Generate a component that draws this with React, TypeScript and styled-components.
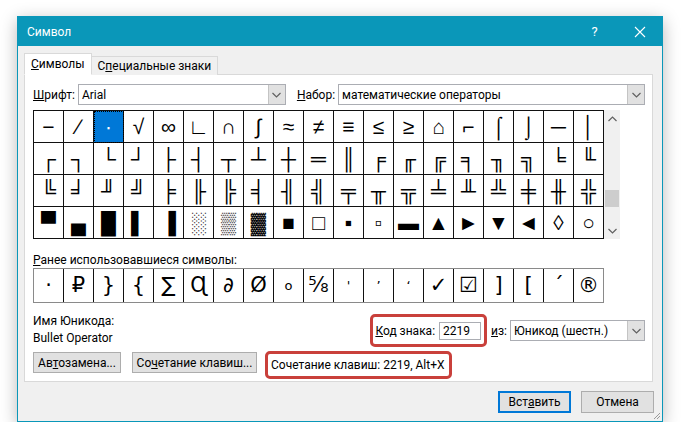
import styled, { createGlobalStyle, css } from 'styled-components';

const GlobalStyle = createGlobalStyle`
  html, body { margin: 0; padding: 0; background: #fff; }
  body {
    font-family: Roboto, "Noto Sans", sans-serif;
    font-size: 12px;
    color: #000;
  }
`;

const ROWS = [
  '−∕∙√∞∟∩∫≈≠≡≤≥⌂⌐⌠⌡─│',
  '┌┐└┘├┤┬┴┼═║╒╓╔╕╖╗╘╙',
  '╚╛╜╝╞╟╠╡╢╣╤╥╦╧╨╩╪╫╬',
  '▀▄█▌▐░▒▓■□▪▫▬▲►▼◄◊○',
];

const RECENT = ['·', '₽', '}', '{', '∑', 'Ɋ', '∂', 'Ø', 'o', '⅝', "'", '’', '‘', '✓', '☑', ']', '[', '´', '®'];

const Chevron = ({ up }: { up?: boolean }) => (
  <svg width="9" height="6" viewBox="0 0 9 6">
    <path d={up ? 'M0.5 5 L4.5 1 L8.5 5' : 'M0.5 1 L4.5 5 L8.5 1'} fill="none" stroke="#606060" strokeWidth="1.2" />
  </svg>
);

export default function App() {
  return (
    <>
      <GlobalStyle />
      <Page>
        <Dialog>
          <TitleBar>
            <Title>Символ</Title>
            <TitleButtons>
              <TitleButton>?</TitleButton>
              <TitleButton>
                <svg width="12" height="12" viewBox="0 0 12 12">
                  <path d="M1 1 L11 11 M11 1 L1 11" stroke="#fff" strokeWidth="1.1" />
                </svg>
              </TitleButton>
            </TitleButtons>
          </TitleBar>

          <Body>
            <Tabs>
              <Tab $active>
                <Key>С</Key>имволы
              </Tab>
              <Tab>
                С<Key>п</Key>ециальные знаки
              </Tab>
            </Tabs>

            <Panel>
              <FieldRow>
                <Label>
                  <Key>Ш</Key>рифт:
                </Label>
                <Combo $width={208}>
                  <ComboText>Arial</ComboText>
                  <ComboButton>
                    <Chevron />
                  </ComboButton>
                </Combo>
                <Label $gap={11}>
                  <Key>Н</Key>абор:
                </Label>
                <Combo $grow>
                  <ComboText>математические операторы</ComboText>
                  <ComboButton>
                    <Chevron />
                  </ComboButton>
                </Combo>
              </FieldRow>

              <GridWrap>
                <Grid>
                  {ROWS.map((row, r) =>
                    Array.from(row).map((ch, c) => (
                      <Cell key={`${r}-${c}`} $selected={r === 0 && c === 2}>
                        {ch}
                      </Cell>
                    )),
                  )}
                </Grid>
                <ScrollBar>
                  <ScrollArrow>
                    <Chevron up />
                  </ScrollArrow>
                  <ScrollTrack>
                    <ScrollThumb />
                  </ScrollTrack>
                  <ScrollArrow>
                    <Chevron />
                  </ScrollArrow>
                </ScrollBar>
              </GridWrap>

              <RecentLabel>
                <Key>Р</Key>анее использовавшиеся символы:
              </RecentLabel>
              <Recent>
                {RECENT.map((ch, i) => (
                  <RecentCell key={i} $small={i === 8 || (i >= 10 && i <= 12)}>
                    {ch}
                  </RecentCell>
                ))}
              </Recent>

              <InfoRow>
                <NameBlock>
                  <div>Имя Юникода:</div>
                  <div>Bullet Operator</div>
                </NameBlock>
                <CodeGroup>
                  <Highlight $padding="0 3px 0 2px">
                    <span>
                      <Key>К</Key>од знака:
                    </span>
                    <CodeInput>2219</CodeInput>
                  </Highlight>
                  <Label $gap={4}>
                    <Key>и</Key>з:
                  </Label>
                  <Combo $width={135}>
                    <ComboText>Юникод (шестн.)</ComboText>
                    <ComboButton>
                      <Chevron />
                    </ComboButton>
                  </Combo>
                </CodeGroup>
              </InfoRow>

              <ButtonRow>
                <Button $width={88}>
                  <span>
                    Ав<Key>т</Key>озамена...
                  </span>
                </Button>
                <Button $width={125}>
                  <span>
                    Со<Key>ч</Key>етание клавиш...
                  </span>
                </Button>
                <Highlight $padding="0 4px 0 3px" $height={28}>
                  Сочетание клавиш: 2219, Alt+X
                </Highlight>
              </ButtonRow>
            </Panel>

            <Footer>
              <Button $width={73} $height={22} $primary>
                <span>
                  Вст<Key>а</Key>вить
                </span>
              </Button>
              <Button $width={73} $height={22}>
                Отмена
              </Button>
            </Footer>
          </Body>

          <Grip width="10" height="10" viewBox="0 0 10 10">
            <path d="M9 3 L3 9 M9 6 L6 9" stroke="#9a9a9a" strokeWidth="1" />
          </Grip>
        </Dialog>
      </Page>
    </>
  );
}

const Page = styled.div`
  padding: 16px 0 0 17px;
`;

const Dialog = styled.div`
  position: relative;
  width: 646px;
  box-sizing: border-box;
  border: 1px solid #0a97b9;
  background: #f0f0f0;
  box-shadow: 0 4px 16px rgba(0, 0, 0, 0.28);
`;

const TitleBar = styled.div`
  display: flex;
  align-items: center;
  justify-content: space-between;
  height: 29px;
  padding-left: 9px;
  background: #0a97b9;
  color: #fff;
`;

const Title = styled.div`
  font-size: 12px;
`;

const TitleButtons = styled.div`
  display: flex;
  align-items: center;
  height: 100%;
`;

const TitleButton = styled.div`
  display: flex;
  align-items: center;
  justify-content: center;
  width: 45px;
  height: 100%;
  font-size: 13px;
  color: #fff;
`;

const Body = styled.div`
  padding: 8px 8px 8px 6px;
`;

const Tabs = styled.div`
  display: flex;
  align-items: flex-end;
  height: 21px;
  position: relative;
  z-index: 1;
  margin-bottom: -1px;
`;

const Tab = styled.div<{ $active?: boolean }>`
  display: flex;
  align-items: center;
  box-sizing: border-box;
  border: 1px solid #d9d9d9;
  ${(p) =>
    p.$active
      ? css`
          height: 22px;
          padding: 0 6px;
          background: #fff;
          border-bottom-color: #fff;
        `
      : css`
          height: 19px;
          padding: 0 6px;
          background: #f0f0f0;
          border-left: none;
          border-bottom: none;
        `}
`;

const Key = styled.span`
  text-decoration: underline;
`;

const Panel = styled.div`
  box-sizing: border-box;
  width: 629px;
  height: 308px;
  padding: 9px 7px 0 8px;
  background: #fff;
  border: 1px solid #d9d9d9;
`;

const FieldRow = styled.div`
  display: flex;
  align-items: center;
  height: 21px;
`;

const Label = styled.div<{ $gap?: number }>`
  margin-left: ${(p) => p.$gap ?? 0}px;
  margin-right: 3px;
  white-space: nowrap;
`;

const Combo = styled.div<{ $width?: number; $grow?: boolean }>`
  display: flex;
  box-sizing: border-box;
  height: 21px;
  ${(p) => (p.$grow ? 'flex: 1;' : `width: ${p.$width}px;`)}
  border: 1px solid #abadb3;
  background: #fff;
`;

const ComboText = styled.div`
  flex: 1;
  display: flex;
  align-items: center;
  padding-left: 3px;
  white-space: nowrap;
`;

const ComboButton = styled.div`
  display: flex;
  align-items: center;
  justify-content: center;
  width: 16px;
  background: #e1e1e1;
  border-left: 1px solid #c4c4c4;
`;

const GridWrap = styled.div`
  display: flex;
  margin-top: 5px;
  height: 129px;
`;

const Grid = styled.div`
  display: grid;
  grid-template-columns: repeat(19, 30px);
  grid-auto-rows: 32px;
  border-top: 1px solid #111;
  border-left: 1px solid #111;
`;

const Cell = styled.div<{ $selected?: boolean }>`
  display: flex;
  align-items: center;
  justify-content: center;
  border-right: 1px solid #111;
  border-bottom: 1px solid #111;
  font-family: "Liberation Sans", "DejaVu Sans", sans-serif;
  font-size: 21px;
  line-height: 1;
  overflow: hidden;
  ${(p) =>
    p.$selected &&
    css`
      background: #0078d7;
      color: #fff;
      outline: 1px dotted #000;
      outline-offset: -1px;
    `}
`;

const ScrollBar = styled.div`
  display: flex;
  flex-direction: column;
  width: 16px;
  background: #f0f0f0;
`;

const ScrollArrow = styled.div`
  display: flex;
  align-items: center;
  justify-content: center;
  height: 17px;
`;

const ScrollTrack = styled.div`
  flex: 1;
  display: flex;
  flex-direction: column;
  justify-content: flex-end;
  padding-bottom: 15px;
`;

const ScrollThumb = styled.div`
  height: 17px;
  margin: 0 1px;
  background: #cdcdcd;
`;

const RecentLabel = styled.div`
  margin-top: 14px;
  height: 15px;
  line-height: 15px;
`;

const Recent = styled.div`
  display: flex;
  width: 571px;
  height: 35px;
  box-sizing: border-box;
  border: 1px solid #8a8a8a;
`;

const RecentCell = styled.div<{ $small?: boolean }>`
  display: flex;
  align-items: center;
  justify-content: center;
  width: 30px;
  flex-shrink: 0;
  box-sizing: border-box;
  border-right: 1px solid #111;
  font-family: "DejaVu Sans", "Liberation Sans", sans-serif;
  font-size: ${(p) => (p.$small ? 13 : 21)}px;
  line-height: 1;
  &:last-child {
    border-right: none;
    width: 29px;
  }
`;

const InfoRow = styled.div`
  display: flex;
  justify-content: space-between;
  align-items: flex-start;
  margin-top: 11px;
  height: 33px;
`;

const NameBlock = styled.div`
  margin-top: -1px;
  line-height: 17px;
`;

const CodeGroup = styled.div`
  display: flex;
  align-items: center;
  height: 33px;
`;

const Highlight = styled.div<{ $padding: string; $height?: number }>`
  display: flex;
  align-items: center;
  gap: 4px;
  box-sizing: border-box;
  height: ${(p) => p.$height ?? 33}px;
  padding: ${(p) => p.$padding};
  border: 3px solid #c9403b;
  border-radius: 5px;
  white-space: nowrap;
`;

const CodeInput = styled.div`
  display: flex;
  align-items: center;
  box-sizing: border-box;
  width: 42px;
  height: 18px;
  padding-left: 3px;
  border: 1px solid #abadb3;
`;

const ButtonRow = styled.div`
  display: flex;
  align-items: flex-start;
  gap: 11px;
  margin-top: 4px;
  & > :last-child {
    margin-left: -3px;
  }
`;

const Button = styled.div<{ $width: number; $height?: number; $primary?: boolean }>`
  display: flex;
  align-items: center;
  justify-content: center;
  box-sizing: border-box;
  width: ${(p) => p.$width}px;
  height: ${(p) => p.$height ?? 21}px;
  margin-top: 1px;
  background: #e1e1e1;
  border: ${(p) => (p.$primary ? '2px solid #0078d7' : '1px solid #adadad')};
  white-space: nowrap;
`;

const Footer = styled.div`
  display: flex;
  justify-content: flex-end;
  gap: 10px;
  margin-top: 8px;
`;

const Grip = styled.svg`
  position: absolute;
  right: 1px;
  bottom: 1px;
`;
